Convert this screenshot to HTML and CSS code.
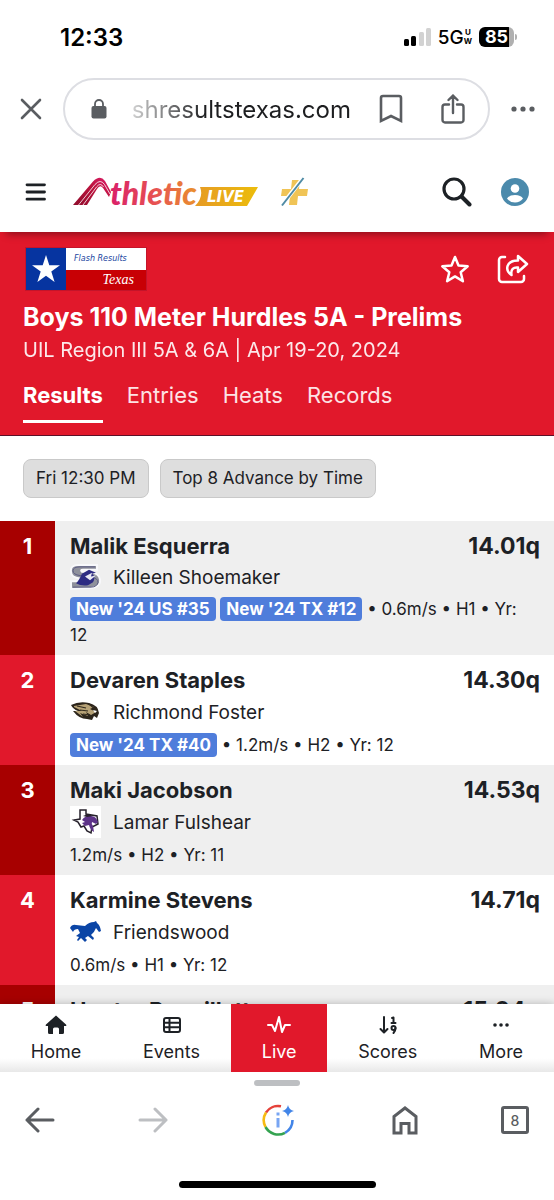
FILE: index.html
```html
<!DOCTYPE html>
<html lang="en">
<head>
    <meta charset="UTF-8">
    <meta name="viewport" content="width=device-width, initial-scale=1.0">
    <title>Boys 110 Meter Hurdles 5A - Prelims</title>
    <link rel="stylesheet" href="styles.css">
</head>
<body>
    <!-- Phone status bar -->
    <div class="status-bar">
        <span class="clock">12:33</span>
        <div class="status-icons">
            <svg width="27" height="18" viewBox="0 0 27 18">
                <rect x="0" y="11" width="5" height="7" rx="1.5" fill="#000"/>
                <rect x="7" y="8" width="5" height="10" rx="1.5" fill="#000"/>
                <rect x="15" y="4" width="5" height="14" rx="1.5" fill="#d2d2d2"/>
                <rect x="22" y="0" width="5" height="18" rx="1.5" fill="#d2d2d2"/>
            </svg>
            <span class="network">5G</span>
            <span class="network-band"><span>U</span><span>W</span></span>
            <span class="battery">85</span>
        </div>
    </div>

    <!-- Browser address bar -->
    <div class="browser-bar">
        <button class="icon-btn" aria-label="Close">
            <svg width="22" height="22" viewBox="0 0 22 22" fill="none" stroke="#5a5d61" stroke-width="2.6" stroke-linecap="round"><path d="M2 2l18 18M20 2L2 20"/></svg>
        </button>
        <div class="address">
            <svg width="16" height="20" viewBox="0 0 16 20"><rect x="0.5" y="7" width="15" height="12.5" rx="2" fill="#5a5d61"/><path d="M4 8V5a4 4 0 0 1 8 0v3" fill="none" stroke="#5a5d61" stroke-width="1.8"/></svg>
            <input class="url" type="text" aria-label="Address" value="shresultstexas.com" readonly>
            <button class="icon-btn" aria-label="Bookmark">
                <svg width="24" height="30" viewBox="0 0 24 30" fill="none" stroke="#5a5d61" stroke-width="2.6"><path d="M2 27V4a2 2 0 0 1 2-2h16a2 2 0 0 1 2 2v23l-10-5z"/></svg>
            </button>
            <button class="icon-btn share" aria-label="Share">
                <svg width="24" height="30" viewBox="0 0 24 30" fill="none" stroke="#5a5d61" stroke-width="2.4" stroke-linecap="round"><path d="M8 10.500H4a2.500 2.500 0 0 0-2.500 2.500v13a2.500 2.500 0 0 0 2.500 2.500h16a2.500 2.500 0 0 0 2.500-2.500V13a2.500 2.500 0 0 0-2.500-2.500h-4M12 19V2M7.500 6L12 1.600 16.500 6"/></svg>
            </button>
        </div>
        <button class="icon-btn" aria-label="Menu">
            <svg width="24" height="6" viewBox="0 0 24 6" fill="#5a5d61"><circle cx="3" cy="3" r="2.600"/><circle cx="12" cy="3" r="2.600"/><circle cx="21" cy="3" r="2.600"/></svg>
        </button>
    </div>

    <!-- Site header -->
    <header class="site-header">
        <button class="icon-btn" aria-label="Open menu">
            <svg width="21" height="18" viewBox="0 0 21 18" stroke="#1d2125" stroke-width="2.800" stroke-linecap="round"><path d="M2 1.800h17.500M2 9h17.500M2 16.200h17.500"/></svg>
        </button>
        <a class="logo" href="#" aria-label="AthleticLIVE">
            <svg width="185" height="30" viewBox="0 0 185 30">
                <defs>
                    <linearGradient id="word" gradientUnits="userSpaceOnUse" x1="36" y1="0" x2="130" y2="0">
                        <stop offset="0" stop-color="#d91e6a"/>
                        <stop offset="0.5" stop-color="#e75352"/>
                        <stop offset="1" stop-color="#ea9a28"/>
                    </linearGradient>
                    <linearGradient id="track" x1="0" y1="1" x2="1" y2="0">
                        <stop offset="0" stop-color="#8f0d2c"/>
                        <stop offset="0.6" stop-color="#bd123e"/>
                        <stop offset="1" stop-color="#dc1f6c"/>
                    </linearGradient>
                    <linearGradient id="flag" x1="0" y1="0" x2="1" y2="0">
                        <stop offset="0" stop-color="#e69a25"/>
                        <stop offset="1" stop-color="#ecbd0b"/>
                    </linearGradient>
                </defs>
                <path d="M0 28L20 4.500Q27-2.500 32 4L38 15 36 20 30 11Q27 7 24 12L14 28z" fill="url(#track)"/>
                <path d="M5.500 28L22 7.500Q27.500 1.500 31.500 7.500L37 17M10 28L23.500 10Q27.500 5 30.500 10" fill="none" stroke="#fff" stroke-width="0.800"/>
                <path d="M127 10h58l-11 19h-52q9-9 5-19z" fill="url(#flag)"/>
                <text class="logo-word" x="37" y="28" fill="url(#word)">thletic</text>
                <text class="logo-live" x="134" y="25">LIVE</text>
            </svg>
        </a>
        <a class="plus" href="#" aria-label="AthleticLIVE Plus">
            <svg width="28" height="30" viewBox="0 0 28 30"><path d="M12 3h8l-1 9h9l-1 7h-9l-1 9H9l1-9H1l1-7h9z" fill="#f0c456"/><path d="M23 1L2 28" stroke="#fff" stroke-width="4"/><path d="M23.500 1L2 28.500" stroke="#4f8ba5" stroke-width="2"/></svg>
        </a>
        <button class="icon-btn search" aria-label="Search">
            <svg width="30" height="30" viewBox="0 0 30 30" fill="none" stroke="#1d2125" stroke-linecap="round"><circle cx="12" cy="12" r="10" stroke-width="3.200"/><path d="M19.500 19.500l8 8" stroke-width="4"/></svg>
        </button>
        <button class="icon-btn" aria-label="Account">
            <svg width="28" height="28" viewBox="0 0 28 28"><circle cx="14" cy="14" r="14" fill="#4b8aac"/><circle cx="14" cy="10.500" r="4.300" fill="#fff"/><path d="M6 20.500Q8 17 14 17t8 3.500Q19 24.500 14 24.500T6 20.500z" fill="#fff"/></svg>
        </button>
    </header>

    <main>
        <!-- Event banner -->
        <section class="event">
            <div class="event-top">
                <div class="sponsor">
                    <div class="sponsor-star">
                        <svg width="28" height="28" viewBox="0 0 28 28"><path d="M14 0l3.300 10.200H28l-8.700 6.400 3.300 10.400L14 20.700 5.400 27l3.300-10.400L0 10.200h10.700z" fill="#fff"/></svg>
                    </div>
                    <div class="sponsor-text">
                        <span class="sponsor-flash">Flash Results</span>
                        <span class="sponsor-texas">Texas</span>
                    </div>
                </div>
                <button class="icon-btn favorite" aria-label="Favorite">
                    <svg width="30" height="30" viewBox="0 0 30 30" fill="none" stroke="#fff" stroke-width="2.500" stroke-linejoin="round"><path d="M15 3l3.500 8.500 9.200.700-7 6 2.200 9L15 22.400 7.100 27.200l2.200-9-7-6 9.200-.700z"/></svg>
                </button>
                <button class="icon-btn" aria-label="Share event">
                    <svg width="32" height="30" viewBox="0 0 32 30" fill="none" stroke="#fff" stroke-width="2.500" stroke-linejoin="round" stroke-linecap="round"><path d="M8 3H5a3 3 0 0 0-3 3v19a3 3 0 0 0 3 3h19a3 3 0 0 0 3-3v-3"/><path d="M21 2l9 8-9 8v-4.500c-4.500-.500-7.500 1.500-6.500 7.500C7.500 16 9 6.500 21 6.500z"/></svg>
                </button>
            </div>
            <h1>Boys 110 Meter Hurdles 5A - Prelims</h1>
            <p class="meet">UIL Region III 5A &amp; 6A | Apr 19-20, 2024</p>
            <nav class="tabs">
                <a href="#" class="active">Results</a>
                <a href="#">Entries</a>
                <a href="#">Heats</a>
                <a href="#">Records</a>
            </nav>
        </section>

        <div class="chips">
            <span class="chip">Fri 12:30 PM</span>
            <span class="chip">Top 8 Advance by Time</span>
        </div>

        <!-- Results -->
        <ol class="results">
            <li class="result">
                <div class="place">1</div>
                <div class="details">
                    <div class="line"><span class="name">Malik Esquerra</span><span class="mark">14.01q</span></div>
                    <div class="school">
                        <svg width="31" height="26" viewBox="0 2 31 27" preserveAspectRatio="none"><path d="M27 3H9Q0 3 1 10q0 6 9 7l8 1q3 0 3 2H1v8l20-1q10-1 9-9-1-6-8-7l-10-1q-2-2 1-2h14z" fill="#8f919c" stroke="#f8f8fb" stroke-width="2"/><path d="M25 5H10q-7 0-7 4 0 4 7 5l12 2q6 1 6 5-1 5-7 5H3" fill="none" stroke="#5b5b83" stroke-width="1"/><path d="M6 22q3-3 6-10l7-4 7 3-4 1q4 3 1 9l-5 3q-7 1-12-2z" fill="#2d2b83"/><path d="M15 15l7-4-1 4 5-1-6 5z" fill="#e8e8f4"/></svg>
                        <span>Killeen Shoemaker</span>
                    </div>
                    <div class="meta"><span class="badge">New '24 US #35</span> <span class="badge">New '24 TX #12</span> • 0.6m/s • H1 • Yr: 12</div>
                </div>
            </li>
            <li class="result">
                <div class="place">2</div>
                <div class="details">
                    <div class="line"><span class="name">Devaren Staples</span><span class="mark">14.30q</span></div>
                    <div class="school">
                        <svg width="31" height="32" viewBox="0 0 31 32"><path d="M1 9q8-4 18-2 9 2 10 10l-2 5-3-2-2 4-5-1q-8 0-14-8l5 0Q3 13 1 9z" fill="#2c251b"/><path d="M4 10l12-2 8 3-4 2 6 3-5 3-5-3 2 4-8-3 3 4-8-6 7 0-8-4z" fill="#b6a276"/><path d="M7 10l9 2M10 14l8 1M13 18l7 1M19 8l7 6" stroke="#30281d" stroke-width="1.200"/><path d="M23 14l4 1-2 2z" fill="#fff"/></svg>
                        <span>Richmond Foster</span>
                    </div>
                    <div class="meta"><span class="badge">New '24 TX #40</span> • 1.2m/s • H2 • Yr: 12</div>
                </div>
            </li>
            <li class="result">
                <div class="place">3</div>
                <div class="details">
                    <div class="line"><span class="name">Maki Jacobson</span><span class="mark">14.53q</span></div>
                    <div class="school">
                        <svg width="31" height="32" viewBox="0 0 31 32"><rect width="31" height="32" fill="#fff"/><path d="M10 4h6v4l11 2 1 8-6 3-1 6-4-2-3-5-3 1-3-5-4-2H4l6-1z" fill="#fff" stroke="#27222c" stroke-width="1.500"/><path d="M12 14q4-5 9-4 5 0 7 6l-2 2-4-2q-1 2 1 4l1 6q-4-2-5-7l-4 1-3-3 3-1z" fill="#5d3388"/><path d="M13 10l5-2 5 2-6 1z" fill="#28202f"/></svg>
                        <span>Lamar Fulshear</span>
                    </div>
                    <div class="meta">1.2m/s • H2 • Yr: 11</div>
                </div>
            </li>
            <li class="result">
                <div class="place">4</div>
                <div class="details">
                    <div class="line"><span class="name">Karmine Stevens</span><span class="mark">14.71q</span></div>
                    <div class="school">
                        <svg width="31" height="32" viewBox="0 0 31 32"><path d="M0 12q2-4 6-3l9 1q4-4 9-4l2-1 1 2q3 2 4 8l-2 1-3-4q-2 5-5 7l3 3-1 2-5-4-3 2 2 2-2 2-4-4-3 3-1-1 2-3-3-1 4-3-2-4q-4 0-5 3z" fill="#0b45a6"/></svg>
                        <span>Friendswood</span>
                    </div>
                    <div class="meta">0.6m/s • H1 • Yr: 12</div>
                </div>
            </li>
            <li class="result">
                <div class="place">5</div>
                <div class="details">
                    <div class="line"><span class="name">Hunter Bouvillette</span><span class="mark">15.04q</span></div>
                </div>
            </li>
        </ol>
    </main>

    <!-- Site bottom navigation -->
    <nav class="bottom-nav">
        <a href="#">
            <svg width="22" height="20" viewBox="0 0 22 20" fill="#1d2125"><path d="M11 .500L1 9.500q-1 1.500.700 1.500H3v6.500Q3 19 4.500 19H8v-5q0-1.500 1.500-1.500h3q1.500 0 1.500 1.500v5h3.500q1.500 0 1.500-1.500V11h1.300q1.700 0 .700-1.500z"/></svg>
            <span>Home</span>
        </a>
        <a href="#">
            <svg width="20" height="20" viewBox="0 0 20 20" fill="none" stroke="#1d2125" stroke-width="2"><rect x="2" y="3" width="16" height="14" rx="2"/><path d="M2 7.700h16M2 12.300h16M7.500 3v14"/></svg>
            <span>Events</span>
        </a>
        <a href="#" class="active">
            <svg width="24" height="20" viewBox="0 0 24 20" fill="none" stroke="#fff" stroke-width="2" stroke-linejoin="round" stroke-linecap="round"><path d="M1 10h4l3 6L12 2l3 15 3-7h5"/></svg>
            <span>Live</span>
        </a>
        <a href="#">
            <svg width="20" height="20" viewBox="0 0 20 20" fill="none" stroke="#1d2125" stroke-width="2" stroke-linecap="round" stroke-linejoin="round"><path d="M6 2v15M2.500 14L6 17.500 9.500 14M14 3l1.500-.500V8M13.500 8h4"/><circle cx="15.500" cy="13" r="2"/><path d="M17.500 13q0 3-2 5"/></svg>
            <span>Scores</span>
        </a>
        <a href="#">
            <svg width="20" height="20" viewBox="0 0 20 20" fill="#1d2125"><circle cx="4" cy="10" r="1.800"/><circle cx="10" cy="10" r="1.800"/><circle cx="16" cy="10" r="1.800"/></svg>
            <span>More</span>
        </a>
    </nav>

    <!-- Browser toolbar -->
    <footer class="browser-footer">
        <div class="grabber"></div>
        <div class="toolbar">
            <button class="icon-btn" aria-label="Back">
                <svg width="30" height="26" viewBox="0 0 30 26" fill="none" stroke="#5a5d61" stroke-width="3" stroke-linecap="round" stroke-linejoin="round"><path d="M28 13H2M13 2L2 13l11 11"/></svg>
            </button>
            <button class="icon-btn" aria-label="Forward">
                <svg width="30" height="26" viewBox="0 0 30 26" fill="none" stroke="#bdbfc2" stroke-width="3" stroke-linecap="round" stroke-linejoin="round"><path d="M2 13h26M17 2l11 11-11 11"/></svg>
            </button>
            <button class="icon-btn page-info" aria-label="Page info">
                <svg width="34" height="34" viewBox="0 0 34 34" fill="none" stroke-width="2.600"><path d="M20 3.300A14.500 14.500 0 0 0 5 9.500" stroke="#e5423a"/><path d="M5 9.500A14.500 14.500 0 0 0 4.500 24" stroke="#f6ba12"/><path d="M4.500 24A14.500 14.500 0 0 0 24 29.800" stroke="#34a350"/><path d="M24 29.800A14.500 14.500 0 0 0 31.500 17" stroke="#4285e8"/><path d="M17 15v9.500M17 9.500v3" stroke="#78a5f3" stroke-width="3"/><path d="M27 2q1 5 6 6-5 1-6 6-1-5-6-6 5-1 6-6z" fill="#4285e8"/></svg>
            </button>
            <button class="icon-btn" aria-label="Home">
                <svg width="26" height="30" viewBox="0 0 26 30" fill="none" stroke="#5a5d61" stroke-width="3"><path d="M2 28V11.500L13 3l11 8.500V28h-7v-9.500H9V28z"/></svg>
            </button>
            <button class="tab-count" aria-label="Open tabs">8</button>
        </div>
        <div class="home-indicator"></div>
    </footer>
</body>
</html>
```
FILE: styles.css
```css
* {
    box-sizing: border-box;
}
body {
    margin: 0;
    height: 100vh;
    display: flex;
    flex-direction: column;
    background: #fff;
    color: #1d2125;
    font-family: Inter, "Liberation Sans", sans-serif;
}
h1, p, ol {
    margin: 0;
    padding: 0;
}
svg {
    display: block;
    flex: none;
}
a {
    color: inherit;
    text-decoration: none;
}
.icon-btn {
    padding: 0;
    border: none;
    background: none;
    cursor: pointer;
}

/* Status bar */
.status-bar {
    display: flex;
    justify-content: space-between;
    align-items: center;
    height: 74px;
    flex: none;
    padding: 0 40px 0 60px;
    color: #000;
}
.clock {
    font-size: 24px;
    font-weight: 600;
}
.status-icons {
    display: flex;
    align-items: center;
}
.network {
    margin-left: 7px;
    font-size: 19px;
    font-weight: 500;
}
.network-band {
    display: flex;
    flex-direction: column;
    align-items: center;
    font-size: 8px;
    line-height: 9px;
    font-weight: 700;
}
.battery {
    position: relative;
    margin-left: 7px;
    width: 35px;
    border-radius: 6px;
    background: linear-gradient(90deg, #000 86%, #b0b0b0 86%);
    color: #fff;
    font-size: 18px;
    line-height: 20px;
    font-weight: 700;
    text-align: center;
}
.battery::after {
    content: "";
    position: absolute;
    top: 7px;
    right: -3px;
    width: 2px;
    height: 6px;
    border-radius: 0 2px 2px 0;
    background: #b0b0b0;
}

/* Address bar */
.browser-bar {
    display: flex;
    align-items: center;
    gap: 21px;
    flex: none;
    padding: 4px 19px 0 20px;
}
.address {
    flex: 1;
    min-width: 0;
    display: flex;
    align-items: center;
    height: 62px;
    padding: 0 23px 0 26px;
    border: 2px solid #dddee3;
    border-radius: 31px;
}
.url {
    flex: 1;
    min-width: 0;
    margin: 0 28px 0 20px;
    padding: 0;
    border: none;
    background: none;
    color: #1d1e20;
    font: 24px Inter, "Liberation Sans", sans-serif;
    text-align: right;
    -webkit-mask-image: linear-gradient(90deg, rgba(0,0,0,0.15), #000 35%);
    mask-image: linear-gradient(90deg, rgba(0,0,0,0.15), #000 35%);
}
.share {
    margin-left: 38px;
}

/* Site header */
.site-header {
    position: relative;
    z-index: 1;
    display: flex;
    align-items: center;
    flex: none;
    height: 92px;
    padding: 12px 25px 0;
    background: #fff;
    box-shadow: 0 8px 8px -6px rgba(0,0,0,0.4);
}
.logo {
    margin-left: 27px;
}
.plus {
    margin-left: 22px;
}
.search {
    margin-left: auto;
    margin-right: 29px;
}
.logo-word {
    font: italic 900 32px Lato, sans-serif;
}
.logo-live {
    font: italic bold 15px "DejaVu Sans", sans-serif;
    fill: #fff;
}

/* Event banner */
main {
    flex: 1;
    min-height: 0;
    overflow-y: auto;
    scrollbar-width: none;
}
.event {
    padding: 14px 23px 12px;
    background: #e1182b;
    border-bottom: 1px solid #5c1028;
    color: #fff;
}
.event-top {
    display: flex;
    align-items: center;
    gap: 27px;
    height: 45px;
    padding: 0 2px;
}
.sponsor {
    display: flex;
    width: 122px;
    height: 44px;
    border: 1px solid #c4142a;
}
.sponsor-star {
    display: flex;
    align-items: center;
    justify-content: center;
    width: 40px;
    background: #0634a0;
}
.sponsor-text {
    flex: 1;
    display: flex;
    flex-direction: column;
    background: #fff;
}
.sponsor-flash {
    flex: 1;
    padding-left: 8px;
    color: #1d479f;
    font: italic 8px/22px "DejaVu Sans", sans-serif;
}
.sponsor-texas {
    flex: 1;
    padding-right: 12px;
    background: #c80005;
    font: italic 14px/19px "Liberation Serif", serif;
    text-align: right;
}
.favorite {
    margin-left: auto;
}
h1 {
    margin-top: 10px;
    font-size: 25px;
    line-height: 32px;
    font-weight: 700;
}
.meet {
    margin-top: 1px;
    font-size: 20px;
    line-height: 32px;
    opacity: 0.9;
}
.tabs {
    display: flex;
    gap: 24px;
    margin-top: 12px;
    font-size: 22px;
    line-height: 34px;
}
.tabs a {
    padding-bottom: 8px;
    border-bottom: 3px solid transparent;
    color: #fde3e5;
}
.tabs .active {
    border-color: #fff;
    color: #fff;
    font-weight: 700;
}

/* Chips */
.chips {
    display: flex;
    gap: 11px;
    padding: 23px;
}
.chip {
    padding: 0 12px;
    border: 1px solid #c9c9c9;
    border-radius: 8px;
    background: #dedede;
    font-size: 17px;
    line-height: 37px;
}

/* Results */
.results {
    list-style: none;
}
.result {
    display: flex;
}
.result:nth-child(odd) {
    background: #efefef;
}
.place {
    flex: none;
    width: 55px;
    padding-top: 9px;
    background: #e1182b;
    color: #fff;
    font-size: 22px;
    line-height: 32px;
    font-weight: 700;
    text-align: center;
}
.result:nth-child(odd) .place {
    background: #a70000;
}
.details {
    flex: 1;
    min-width: 0;
    padding: 9px 14px 7px 15px;
}
.line {
    display: flex;
    justify-content: space-between;
    font-size: 22px;
    line-height: 32px;
    font-weight: 700;
}
.mark {
    font-size: 23px;
}
.school {
    display: flex;
    align-items: center;
    gap: 12px;
    min-height: 30px;
    font-size: 19px;
}
.meta {
    padding: 4px 12px 0 0;
    font-size: 17px;
    line-height: 26px;
}
.badge {
    display: inline-block;
    padding: 0 6px;
    border-radius: 4px;
    background: #4f7ddb;
    color: #fff;
    font-weight: 700;
    line-height: 24px;
}

/* Bottom navigation */
.bottom-nav {
    position: relative;
    display: flex;
    flex: none;
    height: 68px;
    background: linear-gradient(#fff 80%, #e8e8e8);
    box-shadow: 0 0 8px rgba(0,0,0,0.25);
    font-size: 18px;
    line-height: 24px;
}
.bottom-nav a {
    flex: 1 1 auto;
    display: flex;
    flex-direction: column;
    align-items: center;
    gap: 5px;
    padding-top: 11px;
}
.bottom-nav .active {
    background: #e1182b;
    color: #fff;
}

/* Browser toolbar */
.browser-footer {
    position: relative;
    display: flex;
    flex-direction: column;
    align-items: center;
    flex: none;
    height: 128px;
    padding: 8px 25px 12px;
    background: #fff;
}
.grabber {
    width: 46px;
    height: 6px;
    border-radius: 3px;
    background: #bdbfc2;
}
.toolbar {
    display: flex;
    align-items: center;
    justify-content: space-between;
    width: 100%;
    margin-top: 17px;
}
.page-info {
    padding: 0 14px 0 10px;
}
.tab-count {
    width: 28px;
    height: 28px;
    padding: 0;
    border: 3px solid #5a5d61;
    border-radius: 3px;
    background: none;
    color: #5a5d61;
    font: 500 14px Inter, sans-serif;
}
.home-indicator {
    width: 197px;
    height: 7px;
    margin-top: auto;
    border-radius: 4px;
    background: #000;
}
```
